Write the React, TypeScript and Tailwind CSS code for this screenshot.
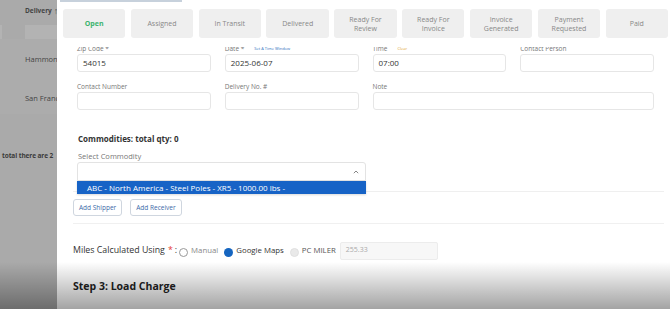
import React from "react";

const tabs: { label: string[]; active?: boolean }[] = [
  { label: ["Open"], active: true },
  { label: ["Assigned"] },
  { label: ["In Transit"] },
  { label: ["Delivered"] },
  { label: ["Ready For", "Review"] },
  { label: ["Ready For", "Invoice"] },
  { label: ["Invoice", "Generated"] },
  { label: ["Payment", "Requested"] },
  { label: ["Paid"] },
];

function Field({ label, value, extra }: { label: string; value?: string; extra?: React.ReactNode }) {
  return (
    <div className="flex flex-col">
      <div className="flex items-center gap-[10px] h-[7px] text-[6.5px] leading-[7px] text-[#777]">
        <span>{label}</span>
        {extra}
      </div>
      <div className="mt-[2px] h-[18px] rounded-[3px] border border-[#e6e6e6] bg-white px-[5px] flex items-center text-[8px] text-[#333]">
        {value}
      </div>
    </div>
  );
}

function Radio({ state }: { state: "off" | "on" | "disabled" }) {
  if (state === "on")
    return <span className="w-[9px] h-[9px] rounded-full bg-[#1565c0] inline-block shrink-0" />;
  if (state === "disabled")
    return <span className="w-[9px] h-[9px] rounded-full bg-[#e9e9e9] border border-[#e0e0e0] inline-block shrink-0" />;
  return <span className="w-[9px] h-[9px] rounded-full bg-white border border-[#999] inline-block shrink-0" />;
}

export default function App() {
  return (
    <div
      className="relative w-[670px] h-[309px] overflow-hidden flex bg-[#aaaaaa]"
      style={{ fontFamily: '"Open Sans", "Liberation Sans", sans-serif' }}
    >
      {/* backdrop page */}
      <div className="w-[57px] shrink-0 overflow-hidden relative">
        <div className="w-[200px] flex flex-col">
          <div className="h-[22px] flex items-center pl-[25px] gap-[2px] text-[6.5px] font-bold text-[#444]">
            <span>Delivery</span>
            <span className="text-[9px] font-normal text-[#555]">↑</span>
          </div>
          <div className="flex gap-[23px] h-[14px] mt-[3px]">
            <div className="w-[2px] bg-[#b3b3b3]" />
            <div className="w-[60px] bg-[#b3b3b3]" />
          </div>
          <div className="h-[75px] bg-[#acacac] flex flex-col pl-[25px] text-[7.5px] text-[#444]">
            <div className="mt-[15px]">Hammond</div>
            <div className="mt-[28px]">San Francisco</div>
          </div>
          <div className="pl-[2px] mt-[37px] text-[6.5px] font-bold text-[#3a3a3a] tracking-[-0.1px]">total there are 2</div>
        </div>
      </div>

      {/* modal */}
      <div className="flex-1 bg-white flex flex-col relative">
        <div className="h-[2px] w-[122px] ml-[3px] bg-[#c7d1dc]" />
        {/* tabs */}
        <div className="px-[6px] pt-[7px] grid grid-cols-9 gap-x-[5.5px] bg-white relative z-10 h-[45px]">
          {tabs.map((t) => (
            <div
              key={t.label.join(" ")}
              className={`h-[29px] rounded-[3px] bg-[#efefef] flex flex-col items-center justify-center text-center leading-[9px] text-[7px] ${
                t.active ? "text-[#3cb46e] font-bold" : "text-[#888]"
              }`}
            >
              {t.label.map((l) => (
                <span key={l}>{l}</span>
              ))}
            </div>
          ))}
        </div>

        {/* form */}
        <div className="overflow-hidden h-[64px] relative">
          <div className="-mt-[2px] px-[20px] grid grid-cols-4 gap-x-[14px] gap-y-[11px] w-[617px]">
            <Field label="Zip Code *" value="54015" />
            <Field
              label="Date *"
              value="2025-06-07"
              extra={<span className="text-[4px] text-[#2f6fc0]">Set A Time Window</span>}
            />
            <Field label="Time" value="07:00" extra={<span className="text-[4px] text-[#e0a030]">Clear</span>} />
            <Field label="Contact Person" />
            <Field label="Contact Number" />
            <Field label="Delivery No. #" />
            <div className="col-span-2">
              <Field label="Note" />
            </div>
          </div>
        </div>

        <div className="px-[21px] mt-[23px] text-[8px] font-bold text-[#333] leading-[10px]">
          Commodities: total qty: 0
        </div>
        <div className="px-[21px] mt-[7px] text-[7.5px] text-[#777] leading-[10px]">Select Commodity</div>

        <div className="relative mx-[20px] mt-[1px] w-[289px] z-20">
          <div className="h-[19px] border border-[#e3e3e3] rounded-t-[3px] bg-white flex items-center justify-end pr-[6px]">
            <svg width="6" height="4" viewBox="0 0 6 4" fill="none">
              <path d="M0.8 3.2 L3 1 L5.2 3.2" stroke="#777" strokeWidth="0.9" />
            </svg>
          </div>
          <div className="absolute left-0 top-[19px] w-[289px] h-[13px] bg-[#1763c6] text-white text-[8px] flex items-center pl-[10px] shadow-[0_1px_2px_rgba(0,0,0,0.15)]">
            ABC - North America - Steel Poles - XR5 - 1000.00 lbs -
          </div>
        </div>

        <div className="ml-[16px] mr-[10px] mt-[10px] border-t border-[#efefef]" />

        <div className="px-[16px] mt-[7px] flex gap-[8px]">
          <div className="h-[17px] px-[5px] rounded-[3px] border border-[#cfd6df] flex items-center text-[6.5px] text-[#3b6aa8]">
            Add Shipper
          </div>
          <div className="h-[17px] px-[5px] rounded-[3px] border border-[#cfd6df] flex items-center text-[6.5px] text-[#3b6aa8]">
            Add Receiver
          </div>
        </div>

        <div className="ml-[16px] mr-[10px] mt-[7px] border-t border-[#f0f0f0]" />

        <div className="px-[16px] mt-[17px] flex items-center h-[19px]">
          <span className="text-[8.8px] text-[#333]">Miles Calculated Using</span>
          <span className="text-[8.8px] text-[#e53935] ml-[3px]">*</span>
          <span className="text-[8.8px] text-[#333] ml-[2px]">:</span>
          <span className="ml-[2px]">
            <Radio state="off" />
          </span>
          <span className="ml-[3px] text-[7.8px] text-[#888]">Manual</span>
          <span className="ml-[6px]">
            <Radio state="on" />
          </span>
          <span className="ml-[3px] text-[7.8px] text-[#333]">Google Maps</span>
          <span className="ml-[6px]">
            <Radio state="disabled" />
          </span>
          <span className="ml-[3px] text-[7.8px] text-[#555]">PC MILER</span>
          <div className="ml-[4px] w-[98px] h-[18px] bg-[#f7f7f7] border border-[#ececec] rounded-[2px] flex items-center pl-[5px] text-[7px] text-[#aaa]">
            255.33
          </div>
        </div>

        <div className="px-[16px] mt-[20px] text-[10.5px] font-bold text-[#222] leading-[12px]">
          Step 3: Load Charge
        </div>
      </div>

      {/* bottom fade shadow */}
      <div className="pointer-events-none absolute left-0 right-0 bottom-0 h-[47px] bg-gradient-to-b from-[rgba(0,0,0,0)] to-[rgba(0,0,0,0.36)] z-30" />
    </div>
  );
}
